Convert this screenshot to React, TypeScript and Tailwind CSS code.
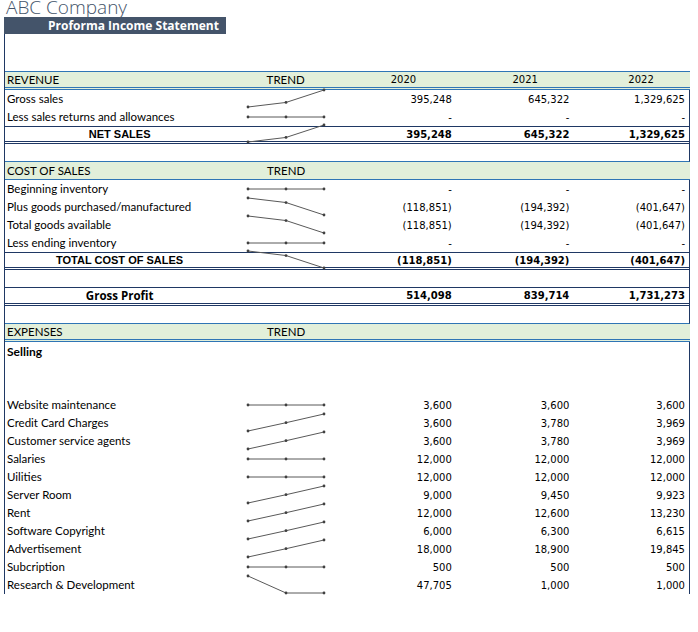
import React from "react";

type Row = {
  kind: "head" | "item" | "total" | "blank" | "sub";
  label?: string;
  v?: (number | null)[];
  noTrend?: boolean;
  cls?: string;
};

const fmt = (n: number | null) => {
  if (n === null || n === 0) return "-";
  const s = Math.abs(n).toLocaleString("en-US");
  return n < 0 ? `(${s})` : s;
};

const rows: Row[] = [
  { kind: "head", label: "REVENUE", cls: "border-b-[3px] border-double border-[#2f75b5]" },
  { kind: "item", label: "Gross sales", v: [395248, 645322, 1329625] },
  { kind: "item", label: "Less sales returns and allowances", v: [0, 0, 0] },
  { kind: "total", label: "NET SALES", v: [395248, 645322, 1329625], cls: "border-t border-b-[3px] border-double border-t-[#1f3864] border-b-[#1f3864]" },
  { kind: "blank", cls: "border-b border-[#2f75b5]" },
  { kind: "head", label: "COST OF SALES", cls: "border-b border-[#2f75b5]" },
  { kind: "item", label: "Beginning inventory", v: [0, 0, 0] },
  { kind: "item", label: "Plus goods purchased/manufactured", v: [-118851, -194392, -401647] },
  { kind: "item", label: "Total goods available", v: [-118851, -194392, -401647] },
  { kind: "item", label: "Less ending inventory", v: [0, 0, 0] },
  { kind: "total", label: "TOTAL COST OF SALES", v: [-118851, -194392, -401647], cls: "border-t border-b-[3px] border-double border-t-[#1f3864] border-b-[#1f3864]" },
  { kind: "blank", cls: "border-b border-[#1f3864]" },
  { kind: "total", label: "Gross Profit", v: [514098, 839714, 1731273], noTrend: true, cls: "border-b-[3px] border-double border-[#1f3864]" },
  { kind: "blank", cls: "border-b border-[#2f75b5]" },
  { kind: "head", label: "EXPENSES", cls: "border-b-[3px] border-double border-[#2f75b5]" },
  { kind: "sub", label: "Selling" },
  { kind: "blank" },
  { kind: "blank" },
  { kind: "item", label: "Website maintenance", v: [3600, 3600, 3600] },
  { kind: "item", label: "Credit Card Charges", v: [3600, 3780, 3969] },
  { kind: "item", label: "Customer service agents", v: [3600, 3780, 3969] },
  { kind: "item", label: "Salaries", v: [12000, 12000, 12000] },
  { kind: "item", label: "Uilities", v: [12000, 12000, 12000] },
  { kind: "item", label: "Server Room", v: [9000, 9450, 9923] },
  { kind: "item", label: "Rent", v: [12000, 12600, 13230] },
  { kind: "item", label: "Software Copyright", v: [6000, 6300, 6615] },
  { kind: "item", label: "Advertisement", v: [18000, 18900, 19845] },
  { kind: "item", label: "Subcription", v: [500, 500, 500] },
  { kind: "item", label: "Research & Development", v: [47705, 1000, 1000] },
];

function Spark({ v }: { v: (number | null)[] }) {
  const nums = v.map((x) => x ?? 0);
  const min = Math.min(...nums);
  const max = Math.max(...nums);
  const xs = [4, 42, 80];
  const ys = nums.map((n) => (max === min ? 9 : 17 - ((n - min) / (max - min)) * 17));
  const pts = xs.map((x, i) => `${x},${ys[i]}`).join(" ");
  return (
    <svg width="86" height="18" viewBox="0 0 86 18" className="overflow-visible">
      <polyline points={pts} fill="none" stroke="#595959" strokeWidth="1" />
      {xs.map((x, i) => (
        <circle key={i} cx={x} cy={ys[i]} r="1.4" fill="#404040" />
      ))}
    </svg>
  );
}

export default function App() {
  return (
    <div className="w-[698px] h-[632px] bg-white overflow-hidden" style={{ fontFamily: "Lato, 'Open Sans', sans-serif" }}>
      <div className="h-[17px] pl-[6px] text-[19px] leading-[17px] text-[#44546a] overflow-hidden" style={{ fontFamily: "'Open Sans', sans-serif", fontWeight: 300 }}>
        <span className="relative top-[-1px]">ABC Company</span>
      </div>
      <div className="ml-[4px] w-[222px] h-[17px] bg-[#44546a] text-white text-[12px] font-bold leading-[17px] pl-[44px] whitespace-nowrap overflow-hidden" style={{ fontFamily: "'Open Sans', sans-serif" }}>
        Proforma Income Statement
      </div>
      <div className="ml-[4px] w-[686px] border-l border-[#1f3864]">
        <div className="h-[38px] border-b border-[#2f75b5]" />
        {rows.map((r, i) => {
          const base = "flex items-center h-[18px] text-[11.5px] text-black " + (r.cls ?? "");
          if (r.kind === "head")
            return (
              <div key={i} className={base + " bg-[#e2efda]"}>
                <div className="w-[240px] pl-[2px]">{r.label}</div>
                <div className="w-[86px] pl-[22px]">TREND</div>
                {r.label === "REVENUE" &&
                  ["2020", "2021", "2022"].map((y, j) => (
                    <div key={j} className={(j === 0 ? "w-[128px] " : "w-[116px] ") + "text-center pl-[18px]"} style={{ fontFamily: "'DejaVu Sans', sans-serif", fontSize: "10px" }}>{y}</div>
                  ))}
              </div>
            );
          return (
            <div key={i} className={base + " border-r border-r-[#1f3864]" + (r.kind === "sub" ? " items-start pt-[1px]" : "")}>
              <div
                className={
                  "w-[240px] " +
                  (r.kind === "total"
                    ? "font-bold text-center pr-[10px]"
                    : r.kind === "sub"
                    ? "font-bold pl-[2px] text-[12px]"
                    : "pl-[2px]")
                }
                style={r.kind === "total" ? { fontFamily: r.label === "Gross Profit" ? "'Open Sans', sans-serif" : "'Liberation Sans', sans-serif", fontSize: r.label === "Gross Profit" ? "11.5px" : "11px" } : undefined}
              >
                {r.label}
              </div>
              <div className="w-[86px] h-[18px]">{r.v && !r.noTrend && <Spark v={r.v} />}</div>
              {r.v &&
                r.v.map((n, j) => (
                  <div
                    key={j}
                    className={(j === 0 ? "w-[128px] pr-[6px] " : "w-[116px] pr-[4px] ") + "text-right " + (r.kind === "total" ? "font-bold" : "")}
                    style={{ fontFamily: "'DejaVu Sans', sans-serif", fontSize: "10px" }}
                  >
                    {fmt(n)}
                  </div>
                ))}
            </div>
          );
        })}
      </div>
    </div>
  );
}
